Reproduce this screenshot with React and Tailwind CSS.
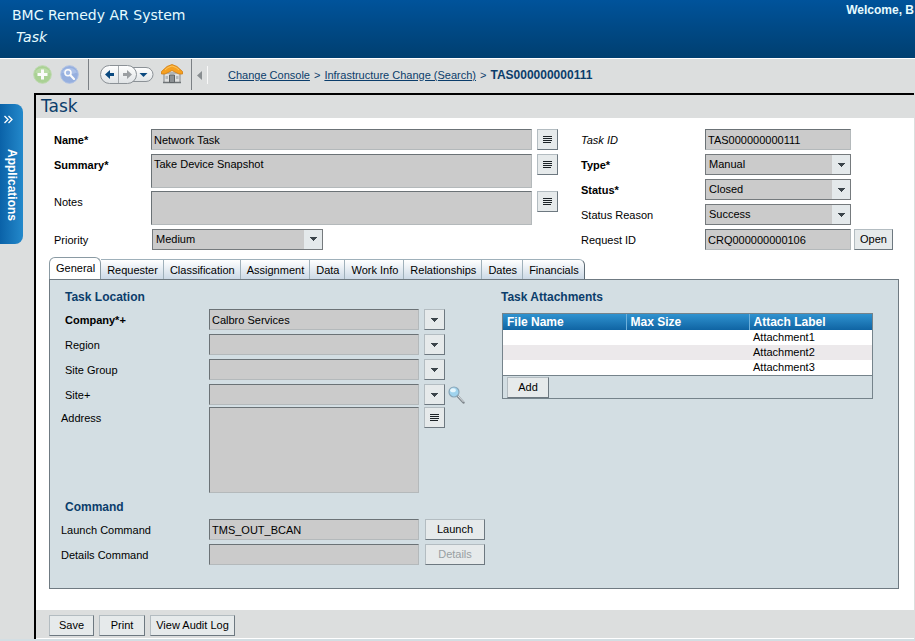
import React, { useState } from 'react';

const TABS = ['General', 'Requester', 'Classification', 'Assignment', 'Data', 'Work Info', 'Relationships', 'Dates', 'Financials'];

const ATTACHMENTS = ['Attachment1', 'Attachment2', 'Attachment3'];

const fieldClass =
    'block min-w-0 resize-none rounded-none border border-t-[#6b7276] border-l-[#6b7276] border-r-[#b4b9bb] border-b-[#b4b9bb] bg-[#cbcbcb] px-[2px] text-[11px] leading-[19px] text-black outline-none';

const buttonClass =
    'h-[21px] shrink-0 whitespace-nowrap border border-t-[#b3bcc1] border-l-[#b3bcc1] border-r-[#6d7880] border-b-[#6d7880] bg-[#e6eaeb] text-[11px] leading-[19px] text-black disabled:text-[#98a0a3]';

// Small down arrow used by selects and menu buttons
const Arrow = () => (
    <svg width="7" height="4" viewBox="0 0 7 4" shapeRendering="crispEdges" aria-hidden="true">
        <path d="M0 0h7v1H6v1H5v1H4v1H3V3H2V2H1V1H0z" fill="#3b444a" />
    </svg>
);

const EditorButton = ({ label }) => (
    <button type="button" aria-label={label} className={`${buttonClass} flex w-[21px] items-center justify-center`}>
        <svg width="9" height="7" viewBox="0 0 9 7" shapeRendering="crispEdges" aria-hidden="true">
            <path d="M0 0h9v1H0zM0 2h9v1H0zM0 4h9v1H0zM0 6h8v1H0z" fill="#1c2226" />
        </svg>
    </button>
);

const MenuButton = ({ label }) => (
    <button type="button" aria-label={label} className={`${buttonClass} flex w-[21px] items-center justify-center`}>
        <Arrow />
    </button>
);

const SelectField = ({ id, value, className }) => (
    <div className={`relative ${className}`}>
        <select
            id={id}
            defaultValue={value}
            className="block h-[21px] w-full appearance-none rounded-none border border-[#757a7d] bg-[#cbcbcb] pl-[3px] pr-6 text-[11px] leading-[19px] text-black outline-none"
        >
            <option>{value}</option>
        </select>
        <span className="pointer-events-none absolute inset-y-px right-px flex w-[18px] items-center justify-center bg-[#e4e9eb]">
            <Arrow />
        </span>
    </div>
);

const Toolbar = () => (
    <div className="flex h-[34px] shrink-0 items-start pl-[33px]">
        <button type="button" aria-label="New" className="mt-[6px] opacity-90">
            <svg width="19" height="19" viewBox="0 0 19 19">
                <circle cx="9.500" cy="9.500" r="8.800" fill="#a5d08c" stroke="#b9d9a8" />
                <path d="M2 7.500a8 7 0 0 1 15 0q-7 3-15 0z" fill="#bfe0ab" opacity=".7" />
                <path d="M8 4.500h3V8h3.500v3H11v3.500H8V11H4.500V8H8z" fill="#fff" />
            </svg>
        </button>
        <button type="button" aria-label="Search" className="ml-2 mt-[6px] opacity-90">
            <svg width="19" height="19" viewBox="0 0 19 19">
                <circle cx="9.500" cy="9.500" r="8.800" fill="#8fabdf" stroke="#a9bee6" />
                <path d="M2 7.500a8 7 0 0 1 15 0q-7 3-15 0z" fill="#b1c6ee" opacity=".7" />
                <circle cx="8" cy="7.800" r="3" fill="#9db7e6" stroke="#fff" strokeWidth="1.600" />
                <path d="M10.500 10.300l3.500 3.600" stroke="#fff" strokeWidth="2.200" strokeLinecap="round" />
            </svg>
        </button>
        <span className="ml-[9px] h-[31px] w-px bg-[#7b8084]" />
        <svg className="ml-[11px] mt-[6px]" width="54" height="19" viewBox="0 0 54 19" role="img" aria-label="History">
            <defs>
                <linearGradient id="pill" x1="0" y1="0" x2="0" y2="1">
                    <stop offset="0" stopColor="#fff" />
                    <stop offset="1" stopColor="#dfe3e5" />
                </linearGradient>
            </defs>
            <path d="M30 2.500h16a7 7 0 0 1 0 14H30z" fill="url(#pill)" stroke="#8b9196" />
            <path d="M9.500.500h18a9 9 0 0 1 0 18h-18a9 9 0 0 1 0-18z" fill="url(#pill)" stroke="#8b9196" />
            <path d="M18.500 1v17" stroke="#a5aaae" />
            <path d="M5 9.500L10 5v3h4v3h-4v3z" fill="#0b4a80" />
            <path d="M32 9.500L27 5v3h-4v3h4v3z" fill="#9b9fa2" />
            <path d="M39.500 8h8l-4 4z" fill="#0b4a80" />
        </svg>
        <button type="button" aria-label="Home" className="ml-[7px] mt-[5px]">
            <svg width="22" height="20" viewBox="0 0 22 20">
                <path d="M3 9h16v9.500H3z" fill="#dfe0e0" stroke="#85898c" />
                <path d="M2 18.500h18" stroke="#6f7477" strokeWidth="1.500" />
                <path d="M8.500 11h5v7.500h-5z" fill="#8c9194" stroke="#5f6467" />
                <path d="M4.500 12h2.500v3H4.500zM15 12h2.500v3H15z" fill="#b5b9bb" />
                <path d="M.500 7.500L6 2.500 11 .500l5 2 5.500 5v2.500h-3.500L11 6.500 4 10H.500z" fill="#f6a020" stroke="#d07d12" strokeWidth=".8" />
                <path d="M4 6l3-2.500L11 2l4 1.500L18 6" stroke="#fdc55c" fill="none" />
            </svg>
        </button>
        <span className="ml-[8px] h-[31px] w-px bg-[#7b8084]" />
        <button type="button" aria-label="Collapse breadcrumb" className="ml-[5px] mt-3">
            <svg width="5" height="9" viewBox="0 0 5 9">
                <path d="M5 0v9L0 4.500z" fill="#888d90" />
            </svg>
        </button>
        <span className="ml-[5px] mt-[7px] h-[18px] w-px bg-[#f8f8f8]" />
        <nav aria-label="Breadcrumb" className="ml-5 mt-2 flex items-center whitespace-nowrap leading-4 text-[#0b3d6b]">
            <a href="#console" className="underline">Change Console</a>
            <span className="mx-1">&gt;</span>
            <a href="#change" className="underline">Infrastructure Change (Search)</a>
            <span className="mx-1">&gt;</span>
            <span className="text-[12px] font-bold">TAS000000000111</span>
        </nav>
    </div>
);

const TaskForm = () => (
    <div className="flex gap-[23px] pl-[18px] pr-[21px] pt-[11px]">
        <div className="flex min-w-0 flex-1 flex-col justify-between">
            <div className="flex">
                <label htmlFor="name" className="w-[97px] shrink-0 pt-px font-bold leading-5">Name*</label>
                <input id="name" readOnly defaultValue="Network Task" className={`${fieldClass} mr-[5px] h-[21px] flex-1`} />
                <EditorButton label="Edit name" />
            </div>
            <div className="flex">
                <label htmlFor="summary" className="w-[97px] shrink-0 pt-px font-bold leading-5">Summary*</label>
                <textarea id="summary" readOnly defaultValue="Take Device Snapshot" className={`${fieldClass} mr-[5px] h-[34px] flex-1`} />
                <EditorButton label="Edit summary" />
            </div>
            <div className="flex">
                <label htmlFor="notes" className="w-[97px] shrink-0 pt-px leading-5">Notes</label>
                <textarea id="notes" readOnly className={`${fieldClass} mr-[5px] h-[34px] flex-1`} />
                <EditorButton label="Edit notes" />
            </div>
            <div className="flex">
                <label htmlFor="priority" className="w-[98px] shrink-0 pt-px leading-5">Priority</label>
                <SelectField id="priority" value="Medium" className="w-[171px]" />
            </div>
        </div>
        <div className="flex w-[312px] shrink-0 flex-col gap-1">
            <div className="flex">
                <label htmlFor="taskId" className="w-[124px] shrink-0 pt-px italic leading-5">Task ID</label>
                <input id="taskId" readOnly defaultValue="TAS000000000111" className={`${fieldClass} h-[21px] w-[146px]`} />
            </div>
            <div className="flex">
                <label htmlFor="type" className="w-[124px] shrink-0 pt-px font-bold leading-5">Type*</label>
                <SelectField id="type" value="Manual" className="w-[146px]" />
            </div>
            <div className="flex">
                <label htmlFor="status" className="w-[124px] shrink-0 pt-px font-bold leading-5">Status*</label>
                <SelectField id="status" value="Closed" className="w-[146px]" />
            </div>
            <div className="flex">
                <label htmlFor="reason" className="w-[124px] shrink-0 pt-px leading-5">Status Reason</label>
                <SelectField id="reason" value="Success" className="w-[146px]" />
            </div>
            <div className="flex">
                <label htmlFor="requestId" className="w-[124px] shrink-0 pt-px leading-5">Request ID</label>
                <input id="requestId" readOnly defaultValue="CRQ000000000106" className={`${fieldClass} mr-[3px] h-[21px] w-[146px]`} />
                <button type="button" className={`${buttonClass} w-[39px]`}>Open</button>
            </div>
        </div>
    </div>
);

const LocationRow = ({ id, label, value = '', bold, children }) => (
    <div className="flex items-center">
        <label htmlFor={id} className={`w-[148px] shrink-0 pl-1 pt-px leading-5 ${bold ? 'font-bold' : ''}`}>{label}</label>
        <input id={id} readOnly defaultValue={value} className={`${fieldClass} mr-[5px] h-[21px] w-[210px]`} />
        <MenuButton label={`${label} menu`} />
        {children}
    </div>
);

const GeneralPanel = () => (
    <div className="flex pl-[11px] pt-[9px]">
        <div className="w-[440px] shrink-0">
            <h2 className="mb-1 pl-1 text-[12px] font-bold leading-4 text-[#0b3d6b]">Task Location</h2>
            <div className="flex flex-col gap-1">
                <LocationRow id="company" label="Company*+" value="Calbro Services" bold />
                <LocationRow id="region" label="Region" />
                <LocationRow id="siteGroup" label="Site Group" />
                <LocationRow id="site" label="Site+">
                    <button type="button" aria-label="Search site" className="ml-[3px]">
                        <svg width="17" height="18" viewBox="0 0 17 18">
                            <path d="M9.500 10l6 6.500" stroke="#7e868c" strokeWidth="2.400" strokeLinecap="round" />
                            <path d="M10 10l5.500 6" stroke="#dce0e3" strokeWidth="1" />
                            <circle cx="6" cy="6" r="5" fill="#9fd3ee" stroke="#8aa6b8" strokeWidth="1.200" />
                            <ellipse cx="5" cy="4.300" rx="2.800" ry="2" fill="#e6f6fd" />
                        </svg>
                    </button>
                </LocationRow>
            </div>
            <div className="mt-[2px] flex">
                <label htmlFor="address" className="w-[148px] shrink-0 pt-px leading-5">Address</label>
                <textarea id="address" readOnly className={`${fieldClass} mr-[5px] h-[86px] w-[210px]`} />
                <EditorButton label="Edit address" />
            </div>
            <h2 className="mb-1 mt-[6px] pl-1 text-[12px] font-bold leading-4 text-[#0b3d6b]">Command</h2>
            <div className="flex flex-col gap-1">
                <div className="flex">
                    <label htmlFor="launch" className="w-[148px] shrink-0 pt-px leading-5">Launch Command</label>
                    <input id="launch" readOnly defaultValue="TMS_OUT_BCAN" className={`${fieldClass} mr-[6px] h-[21px] w-[210px]`} />
                    <button type="button" className={`${buttonClass} w-[60px]`}>Launch</button>
                </div>
                <div className="flex">
                    <label htmlFor="details" className="w-[148px] shrink-0 pt-px leading-5">Details Command</label>
                    <input id="details" readOnly className={`${fieldClass} mr-[6px] h-[21px] w-[210px]`} />
                    <button type="button" disabled className={`${buttonClass} w-[60px]`}>Details</button>
                </div>
            </div>
        </div>
        <div className="mr-[25px] min-w-0 flex-1">
            <h2 id="attachments" className="mb-2 text-[12px] font-bold leading-4 text-[#0b3d6b]">Task Attachments</h2>
            <div className="ml-px border border-[#75838b]">
                <table aria-labelledby="attachments" className="w-full table-fixed border-collapse bg-white text-left">
                    <thead>
                        <tr className="h-4 bg-gradient-to-b from-[#2f93d0] to-[#0f64a3] text-[12px] leading-4 text-white">
                            <th className="border-r border-[#6db0db] py-0 pl-1 font-bold">File Name</th>
                            <th className="border-r border-[#6db0db] py-0 pl-1 font-bold">Max Size</th>
                            <th className="py-0 pl-1 font-bold">Attach Label</th>
                        </tr>
                    </thead>
                    <tbody>
                        {ATTACHMENTS.map((name) => (
                            <tr key={name} className="h-[15px] leading-[15px] even:bg-[#ece9eb]">
                                <td />
                                <td />
                                <td className="py-0 pl-1">{name}</td>
                            </tr>
                        ))}
                    </tbody>
                </table>
                <div className="border-t border-[#75838b] px-1 pt-px">
                    <button type="button" className={`${buttonClass} block w-[42px]`}>Add</button>
                </div>
            </div>
        </div>
    </div>
);

const App = () => {
    const [activeTab, setActiveTab] = useState('General');

    return (
        <div className="flex min-h-screen flex-col overflow-x-hidden bg-[#dcdede] font-['Liberation_Sans',Arial,sans-serif] text-[11px] text-black">
            {/* Header */}
            <header className="flex h-[59px] shrink-0 justify-between border-b border-white bg-gradient-to-b from-[#00539b] to-[#003f70] pl-3 text-[#e6fbff]">
                <div className="pt-[7px] font-['DejaVu_Sans',sans-serif]">
                    <div className="text-[14px] leading-4">BMC Remedy AR System</div>
                    <div className="mt-[6px] pl-1 text-[14px] italic leading-4">Task</div>
                </div>
                <div className="whitespace-nowrap pr-px pt-[2px] text-[12px] font-bold leading-4">Welcome, B</div>
            </header>

            <Toolbar />

            <div className="flex flex-1">
                {/* Applications flyout */}
                <aside className="w-[34px] shrink-0 pt-[11px]">
                    <button type="button" className="flex h-[140px] w-[23px] flex-col items-center rounded-r-lg bg-gradient-to-r from-[#0a62a8] to-[#2389cb] pt-[11px] text-white">
                        <svg className="mr-[7px]" width="9" height="9" viewBox="0 0 9 9" aria-hidden="true">
                            <path d="M.500 1l3.500 3.500L.500 8M4.500 1L8 4.500 4.500 8" fill="none" stroke="#fff" strokeWidth="1.300" />
                        </svg>
                        <span className="mt-[25px] text-[12px] font-bold leading-4 [writing-mode:vertical-rl]">Applications</span>
                    </button>
                </aside>

                <main className="mr-px flex min-w-0 flex-1 flex-col border-l-2 border-t-2 border-black bg-white">
                    <h1 className="bg-[#dcdede] pl-[5px] font-['DejaVu_Sans',sans-serif] text-[17px] leading-[23px] text-[#0b3d6b]">Task</h1>

                    <TaskForm />

                    {/* Tabs */}
                    <div className="ml-[13px] mr-[15px] mt-[7px]">
                        <div role="tablist" className="flex items-end whitespace-nowrap">
                            {TABS.map((tab) => (
                                <button
                                    key={tab}
                                    type="button"
                                    role="tab"
                                    aria-selected={tab === activeTab}
                                    onClick={() => setActiveTab(tab)}
                                    className={
                                        tab === activeTab
                                            ? 'h-[22px] rounded-t-md border border-b-0 border-[#8a9aa3] bg-white pl-[6px] pr-[5px]'
                                            : 'h-5 border-r border-t border-[#9fb0ba] bg-gradient-to-b from-white to-[#ccd9e6] pl-[6px] pr-[5px] pt-px last:rounded-tr-md last:border-r-[#5d6b75]'
                                    }
                                >
                                    {tab}
                                </button>
                            ))}
                        </div>
                        <div role="tabpanel" className="min-h-[310px] border border-[#6f7a82] bg-[#d3dee3]">
                            <GeneralPanel />
                        </div>
                    </div>

                    {/* Footer buttons */}
                    <footer className="mt-auto flex gap-[5px] border-b border-white bg-[#dcdede] pb-[2px] pl-[13px] pt-[5px]">
                        <button type="button" className={`${buttonClass} w-[45px]`}>Save</button>
                        <button type="button" className={`${buttonClass} w-[46px]`}>Print</button>
                        <button type="button" className={`${buttonClass} w-[85px]`}>View Audit Log</button>
                    </footer>
                </main>
            </div>
            <div className="h-[2px] shrink-0 bg-[#d3dee3]" />
        </div>
    );
};

export default App;
